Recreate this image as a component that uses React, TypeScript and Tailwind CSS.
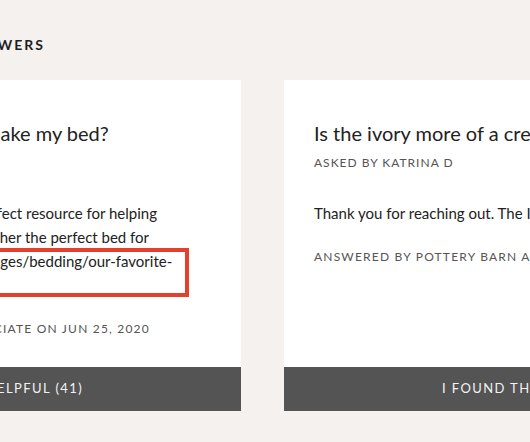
import React from "react";

const font = { fontFamily: "Lato, 'Noto Sans', sans-serif" };

function Card({
  question,
  asked,
  body,
  answered,
  annotate,
}: {
  question: string;
  asked: string;
  body: string[];
  answered: string;
  annotate?: boolean;
}) {
  return (
    <div className="flex w-[520px] shrink-0 flex-col bg-white">
      <div className="px-[30px] pt-[40px] pb-[29px]">
        <div className="whitespace-nowrap text-[20px] leading-[26px] text-[#222]">{question}</div>
        <div className="mt-[8px] whitespace-nowrap text-[12px] uppercase leading-[18px] tracking-[1px] text-[#555]">
          {asked}
        </div>
        <div className="relative mt-[29px] text-[15px] leading-[24px] text-[#222]">
          {body.map((l, i) => (
            <div key={i} className="whitespace-nowrap">
              {l}
            </div>
          ))}
          {annotate && (
            <div className="absolute left-[180px] top-[47px] h-[49px] w-[258px] border-[4px] border-[#e5402b]" />
          )}
        </div>
        <div className="mt-[23px] whitespace-nowrap text-[12px] uppercase leading-[18px] tracking-[1.2px] text-[#555]">
          {answered}
        </div>
      </div>
      <div className="mt-auto flex h-[44px] items-center justify-center bg-[#545454] text-[13px] uppercase tracking-[1.4px] text-[#f2f2f2]">
        I found this helpful (41)
      </div>
    </div>
  );
}

export default function App() {
  return (
    <div className="h-[442px] w-[530px] overflow-hidden bg-[#f4f1ee]" style={font}>
      <div className="ml-[-279px] w-[1200px] pt-[37px]">
        <div className="flex w-[324px] justify-end">
          <div className="whitespace-nowrap text-[14px] font-bold uppercase leading-[16px] tracking-[2px] text-[#1e1e1e]">
            Questions &amp; Answers
          </div>
        </div>
        <div className="mt-[27px] flex items-stretch gap-[43px]">
          <Card
            question="What is the proper way to make my bed?"
            asked="Asked by Jennifer M"
            body={[
              "Thanks for reaching out. Here is a perfect resource for helping",
              "our customers as they try to put together the perfect bed for",
              "you: https://www.potterybarn.com/pages/bedding/our-favorite-",
              "beds/",
            ]}
            answered="Answered by Pottery Barn Associate on Jun 25, 2020"
            annotate
          />
          <Card
            question="Is the ivory more of a cream or a white?"
            asked="Asked by Katrina D"
            body={["Thank you for reaching out. The Ivory is a warm, creamy white color."]}
            answered="Answered by Pottery Barn Associate on Jun 24, 2020"
          />
        </div>
      </div>
    </div>
  );
}
